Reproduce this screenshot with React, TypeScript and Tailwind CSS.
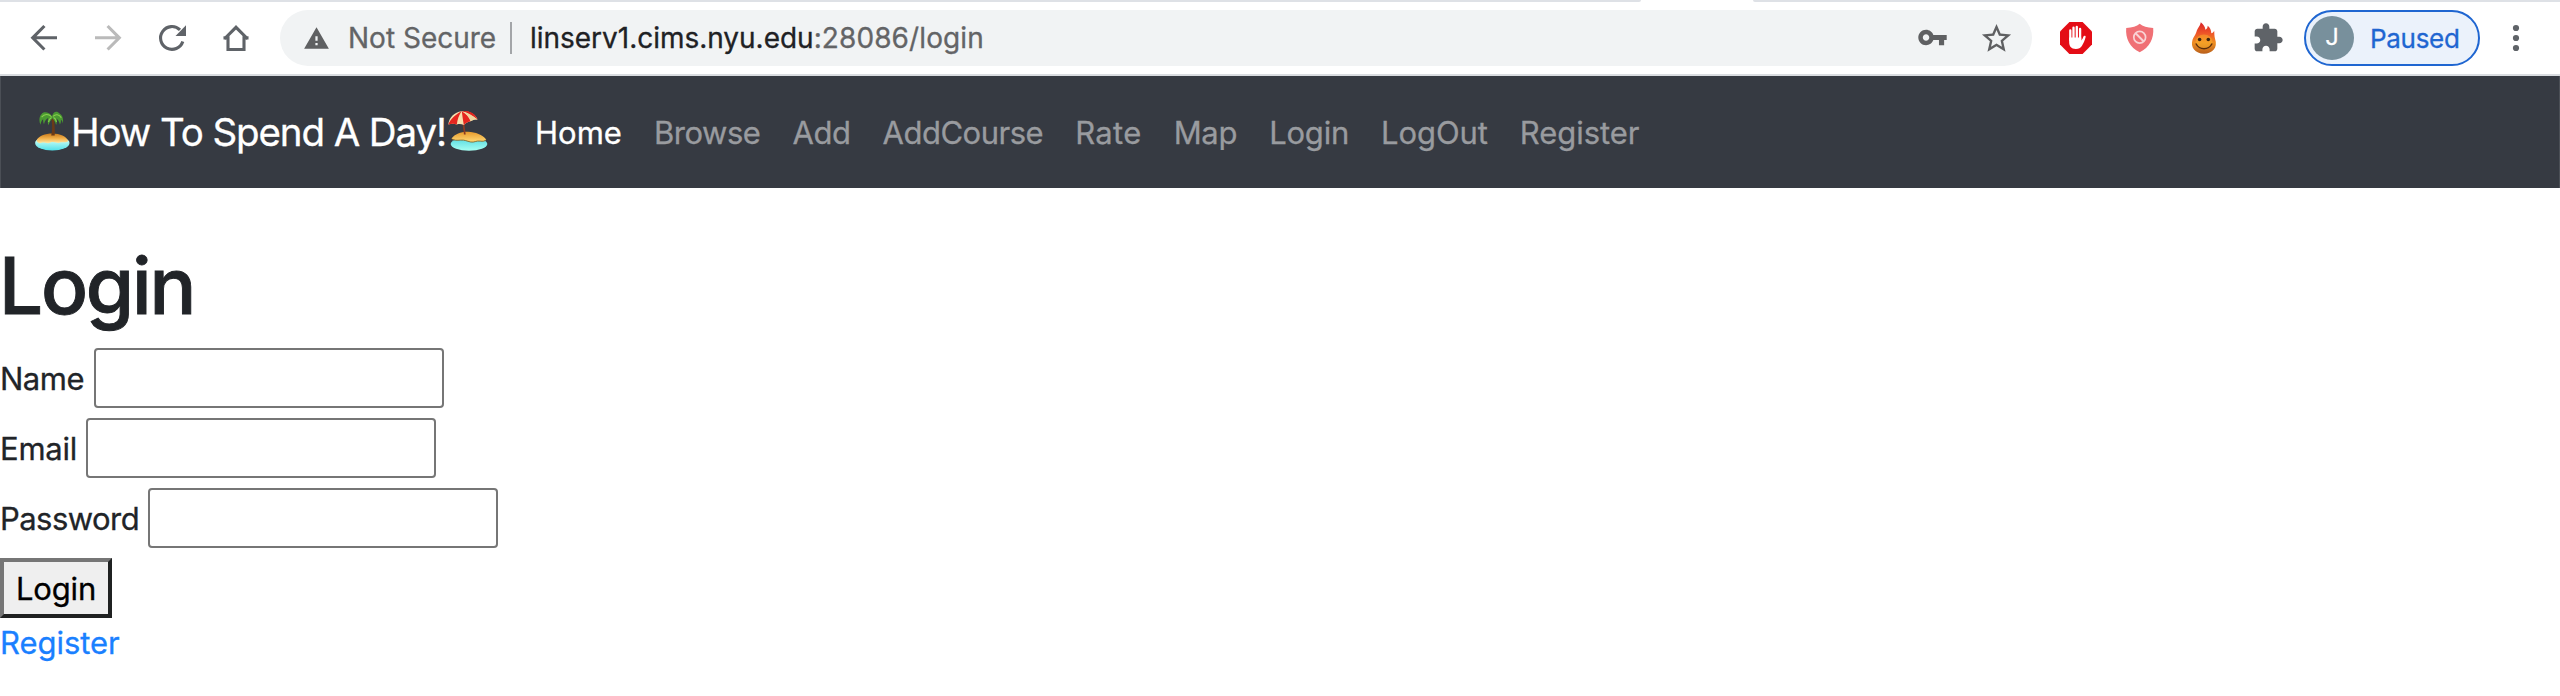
import type { ReactNode } from "react";

function ToolIcon({ children, className = "text-[#5f6368]" }: { children: ReactNode; className?: string }) {
  return (
    <svg viewBox="0 0 40 40" className={`size-10 shrink-0 ${className}`} fill="none" stroke="currentColor" strokeWidth="3.1">
      {children}
    </svg>
  );
}

function PalmIsland() {
  return (
    <svg viewBox="0 0 35 40" className="h-10 w-[35px] shrink-0">
      <defs>
        <linearGradient id="sandA" x1="0" y1="0" x2="0" y2="1">
          <stop offset="0" stopColor="#c87a1c" />
          <stop offset="0.5" stopColor="#f2b04a" />
          <stop offset="1" stopColor="#ffe9a8" />
        </linearGradient>
        <linearGradient id="seaA" x1="0" y1="0" x2="0" y2="1">
          <stop offset="0.3" stopColor="#c9fdf5" />
          <stop offset="1" stopColor="#4fe0ea" />
        </linearGradient>
      </defs>
      <ellipse cx="17.3" cy="32" rx="17.2" ry="7.6" fill="url(#seaA)" />
      <path d="M1.6 29.5C3.5 25 10 22.6 17.5 22.6S31.5 25.5 33 30c-2 2.4-5.5 0.4-8 1.6s-6-1.6-9.5 0-6.5-1-9 0.2-4.400-0.500-4.900-2.300z" fill="url(#sandA)" />
      <path d="M16.200 24.500c1.200-5 1.300-10 0.200-16.500l2.400-0.600c1 6.500 1.200 12 0.900 17.200z" fill="#6b3a17" />
      <path d="M17 5.500C14.500 1 8.500 0 6.500 3.200 4 5.500 3.800 10.500 5.600 13.800c0.400-3 1.200-4.600 2.600-5.600-0.200 2 0 3.600 0.800 5 0.700-3 2.200-5.200 4.200-6.200-0.700 2.500-0.600 5 0.200 7.200 1-3 2.400-5.200 4-7 1.800 1.800 3 4 3.700 6.800 0.900-2 0.900-4.200 0.300-6.400 1.700 1.200 2.900 3.200 3.500 6 1-1.600 1.200-3.200 0.900-5 1 0.700 1.700 2 2 3.800C28.700 8.200 27.500 4 24.500 2.500 21.500-0.800 18 1.200 17 5.500z" fill="#4a9a32" />
      <path d="M16.500 5.600C13.500 2.800 9.500 2.600 6.600 6.200M18 5.400c2.500-2.600 6-2.200 8.300 1.400M16.500 6.500c-1.500 0.700-2.700 2.300-3 4.500M18.600 6.500c1.500 0.700 2.500 2.300 2.900 4.300" fill="none" stroke="#8bd04e" strokeWidth="1.100" />
    </svg>
  );
}

function BeachUmbrella() {
  return (
    <svg viewBox="0 0 40 40" className="size-10 shrink-0">
      <defs>
        <linearGradient id="sandB" x1="0" y1="0" x2="0" y2="1">
          <stop offset="0" stopColor="#e79a2c" />
          <stop offset="1" stopColor="#ffd976" />
        </linearGradient>
        <linearGradient id="seaB" x1="0" y1="0" x2="0" y2="1">
          <stop offset="0.2" stopColor="#63dfe4" />
          <stop offset="1" stopColor="#a6fff3" />
        </linearGradient>
      </defs>
      <ellipse cx="21" cy="33" rx="18.300" ry="6.700" fill="url(#seaB)" />
      <path d="M3.500 27.500C7 23 13 20.600 20 20.800c7.500 0.200 14.500 3.200 18.200 7.600-1 1.800-3.500 2-6 1.600-4-0.600-6 1.600-9.500 0.900-4-0.800-6-2.300-10-1.900-4 0.300-7.500 0.500-9.200-1.500z" fill="url(#sandB)" />
      <path d="M3.500 27.800c2 1.800 5.500 1.600 9.200 1.300 4-0.400 6 1.100 10 1.900 3.500 0.700 5.500-1.500 9.500-0.900 2.500 0.400 5 0.200 6-1.600" fill="none" stroke="#7c5a20" strokeWidth="0.800" />
      <path d="M14.300 3L16.800 23.500" stroke="#8a3a22" strokeWidth="1.800" />
      <path d="M0.300 13.500C1 6.500 6.500 1 13.500 0.300 21-0.500 27.500 3 29.600 8.600c-3-0.300-5 0.300-7 1.700-2.500 0.500-4.600 1.500-6.800 3.600-2.300-1-4.600-1.200-7-0.500-2.600-0.900-5.500-0.900-8.500 0.100z" fill="#f6dfae" />
      <path d="M13.500 0.300C7.500 3.500 2.500 8 0.300 13.500c3-1 5.900-1 8.500-0.100C9.500 8.500 11 4 13.500 0.300zM13.800 0.300c0.500 4.200 1.200 9 2 13.600 2.200-2.100 4.300-3.100 6.800-3.600C21 6 18 2.500 13.800 0.300zM14.500 0.200C20.500 2 25 5 29.600 8.600 27.500 3 21-0.500 14.500 0.200z" fill="#e5261f" />
      <path d="M14.500 0.400C19.500 1.600 24.500 4.600 29.300 8.500c-2.500-0.100-4.600 0.400-6.500 1.600C21.300 6.200 18.500 2.600 14.500 0.400z" fill="#efd59e" />
      <path d="M14.500 0.300c5.500-0.600 10.500 1 13.200 4.700-3.700-2.700-8-4-13.200-4.700z" fill="#d8231d" />
    </svg>
  );
}

function BrowserBar() {
  return (
    <header className="flex h-[76px] flex-col border-b-2 border-[#d9dce0] bg-white">
      <div className="flex h-0.5 justify-between">
        <div className="w-[1641px] rounded-br-[2px] bg-[#dee1e6]" />
        <div className="w-[807px] rounded-bl-[2px] bg-[#dee1e6]" />
      </div>
      <div className="flex flex-1 items-center pl-6">
        <div className="flex gap-6">
          <ToolIcon>
            <path d="M33 19.800H9.500M20.400 8L8.700 19.800L20.400 31.500" />
          </ToolIcon>
          <ToolIcon className="text-[#bababa]">
            <path d="M7 19.800H30.500M19.600 8L31.300 19.800L19.600 31.500" />
          </ToolIcon>
          <ToolIcon>
            <path d="M30.800 23.500A11.400 11.400 0 1 1 28 11.900" />
            <path d="M34 7.200V18H23.500z" fill="currentColor" stroke="none" />
          </ToolIcon>
          <ToolIcon>
            <path d="M8.300 21L20 9.300L31.700 21M7.500 19.900H12V31.500H28V19.900H32.500" />
          </ToolIcon>
        </div>
        <div className="ml-6 flex h-14 w-[1752px] items-center rounded-full bg-[#f1f3f4] pr-[18px] pl-[23px] text-[28px] text-[#636466]">
          <svg viewBox="0 0 24 24" className="size-[27px] shrink-0" fill="#5f6062">
            <path d="M1 21h22L12 2 1 21zm12-3h-2v-2h2v2zm0-4h-2v-4h2v4z" />
          </svg>
          <span className="ml-[18px] w-[162px]">Not Secure</span>
          <span className="h-8 w-0.5 bg-[#a3a5a8]" />
          <span className="ml-[18px] tracking-[-0.02px] text-[#202124]">linserv1.cims.nyu.edu</span>
          <span className="tracking-[0.1px]">:28086/login</span>
          <svg viewBox="0 0 24 24" className="mt-[-2px] mr-[31px] ml-auto size-[31px]" fill="#5f6062">
            <path d="M12.650 10C11.830 7.670 9.610 6 7 6c-3.310 0-6 2.690-6 6s2.690 6 6 6c2.610 0 4.830-1.670 5.650-4H17v4h4v-4h2v-4H12.650zM7 14.500c-1.380 0-2.500-1.120-2.500-2.500s1.120-2.500 2.500-2.500 2.500 1.120 2.500 2.500-1.120 2.500-2.500 2.500z" />
          </svg>
          <svg viewBox="0 0 24 24" className="size-[35px]" fill="#5f6062">
            <path d="M22 9.240l-7.190-.620L12 2 9.190 8.630 2 9.240l5.460 4.730L5.820 21 12 17.270 18.180 21l-1.630-7.030L22 9.240zM12 15.400l-3.760 2.270 1-4.280-3.320-2.880 4.380-.380L12 6.100l1.710 4.040 4.380.380-3.320 2.880 1 4.280L12 15.400z" />
          </svg>
        </div>
        <div className="ml-7 flex gap-8">
          <svg viewBox="0 0 32 32" className="size-8">
            <path d="M9.400 0h13.200L32 9.400v13.200L22.600 32H9.400L0 22.600V9.400z" fill="#e40d16" />
            <path d="M10.300 8.500V18M13.500 5.700V17M16.800 5V17M20.100 7V18" stroke="#fff" strokeWidth="2.300" strokeLinecap="round" />
            <path d="M9.150 15.500h12.100v3c1-1 1.700-2.400 2.200-3.900 0.500-1.200 2.500-0.900 2.200 0.500-0.900 3.300-2 6.200-3.800 8.900-1.300 2.100-3 3-6 3-4.800 0-6.700-3-6.700-7z" fill="#fff" />
          </svg>
          <svg viewBox="0 0 32 32" className="size-8">
            <path d="M15.700 1.800c3 2.500 7.500 4 13.500 4.100 0.900 10.500-3.600 19.500-13.500 24.400C5.800 25.400 1.300 16.400 2.200 5.900c6-0.100 10.500-1.600 13.500-4.100z" fill="#f07075" />
            <circle cx="15.700" cy="15.300" r="5.900" fill="none" stroke="#f9d3d5" strokeWidth="1.700" />
            <path d="M11.600 11.300l8.200 8.200" stroke="#f9d3d5" strokeWidth="2" />
          </svg>
          <svg viewBox="0 0 32 32" className="size-8">
            <defs>
              <linearGradient id="flame" x1="0" y1="0" x2="0" y2="1">
                <stop offset="0" stopColor="#d9232a" />
                <stop offset="0.350" stopColor="#ee5528" />
                <stop offset="0.650" stopColor="#ee8f22" />
                <stop offset="1" stopColor="#b9601c" />
              </linearGradient>
            </defs>
            <path d="M12.800 0.300c2.800 2.200 4.200 4.400 4.600 7.400 1.500-0.800 2.300-2.200 2.300-4 2.400 2 3.500 4.400 3.600 7.600 1.300-0.400 2.200-1.200 2.900-2.600 0.200 2.800 0 5 0.900 8.300 3 8.500-2.700 14.700-11.200 14.700S1.900 25.500 4.600 17.500c1-2.400 2.400-4 3.400-6.500 0.800-2 0.800-3 2-4.800 1.300-2 2.300-3.400 2.800-5.900z" fill="url(#flame)" />
            <ellipse cx="16" cy="20" rx="8.500" ry="7.500" fill="#fbb52c" opacity="0.450" />
            <circle cx="11.600" cy="17.500" r="1.800" fill="#3b2410" />
            <circle cx="20.300" cy="17.500" r="1.800" fill="#3b2410" />
            <path d="M8.200 22c3.200 6.300 12.400 6.300 15.600 0" fill="none" stroke="#5a2d0c" strokeWidth="1.500" strokeLinecap="round" />
          </svg>
          <svg viewBox="0 0 24 24" className="size-8" fill="#5f6368">
            <path d="M20.500 11H19V7c0-1.100-.9-2-2-2h-4V3.500C13 2.120 11.880 1 10.500 1S8 2.120 8 3.500V5H4c-1.100 0-1.990.9-1.990 2v3.800H3.500c1.490 0 2.700 1.210 2.700 2.700s-1.210 2.700-2.700 2.700H2V20c0 1.100.9 2 2 2h3.800v-1.500c0-1.490 1.210-2.700 2.700-2.700 1.490 0 2.700 1.210 2.700 2.700V22H17c1.100 0 2-.9 2-2v-4h1.500c1.380 0 2.500-1.120 2.500-2.500S21.880 11 20.500 11z" />
          </svg>
        </div>
        <div className="ml-5 flex h-14 w-44 items-center rounded-full border-2 border-[#1f66d1] bg-[#ebf2fb] pl-1">
          <span className="flex size-11 items-center justify-center rounded-full bg-[#78909c] font-['Roboto',sans-serif] text-[23px] text-white">J</span>
          <span className="ml-4 pt-px text-[26px] tracking-[-0.3px] text-[#1f66d1]">Paused</span>
        </div>
        <svg viewBox="0 0 32 40" className="ml-5 h-10 w-8" fill="#5f6368">
          <circle cx="16" cy="10" r="3.100" />
          <circle cx="16" cy="20" r="3.100" />
          <circle cx="16" cy="30" r="3.100" />
        </svg>
      </div>
    </header>
  );
}

const links = [
  { label: "Home", style: "text-white tracking-[0.03px]" },
  { label: "Browse", style: "text-[#999b9f] tracking-[-0.47px]" },
  { label: "Add", style: "text-[#999b9f] tracking-[-0.4px]" },
  { label: "AddCourse", style: "text-[#999b9f] tracking-[-0.5px]" },
  { label: "Rate", style: "text-[#999b9f] tracking-[0.35px]" },
  { label: "Map", style: "text-[#999b9f] tracking-[-0.3px]" },
  { label: "Login", style: "text-[#999b9f] tracking-[-0.2px]" },
  { label: "LogOut", style: "text-[#999b9f] tracking-[-0.1px]" },
  { label: "Register", style: "text-[#999b9f] tracking-[-0.05px]" },
];

const fields = [
  { label: "Name", type: "text", width: "w-[94px] tracking-[-0.5px]" },
  { label: "Email", type: "email", width: "w-[86px] tracking-[-0.25px]" },
  { label: "Password", type: "password", width: "w-[148px] tracking-[-0.55px]" },
];

export default function App() {
  return (
    <div className="h-[696px] w-[2560px] overflow-hidden bg-white font-['Inter',sans-serif] text-[31px] text-[#212428] [-webkit-text-stroke:0.3px]">
      <BrowserBar />
      <nav className="flex h-28 items-center border-x border-[#4b4f56] bg-[#363a42] pl-[34px]">
        <div className="flex w-[500px] shrink-0 items-center text-[38.5px] whitespace-nowrap text-white">
          <span className="mt-[-2px]">
            <PalmIsland />
          </span>
          <span className="ml-px w-[377px] pt-0.5 tracking-[-1.1px]">How To Spend A Day!</span>
          <span className="mt-[-2px]">
            <BeachUmbrella />
          </span>
        </div>
        <div className="flex gap-8 pt-[3px]">
          {links.map((l) => (
            <a key={l.label} href="#" className={l.style}>
              {l.label}
            </a>
          ))}
        </div>
      </nav>
      <main className="pt-[50px]">
        <h1 className="-ml-px h-24 text-[78px] leading-[96px] font-medium tracking-[-2.2px] [-webkit-text-stroke:0.9px]">Login</h1>
        <form className="pt-[9px]">
          {fields.map((f) => (
            <label key={f.label} className="flex h-[70px] items-center">
              <span className={`pt-0.5 ${f.width}`}>{f.label}</span>
              <input type={f.type} className="h-[60px] w-[350px] rounded-[4px] border-2 border-[#767676] bg-white" />
            </label>
          ))}
          <div className="flex h-[70px] items-center">
            <button
              type="button"
              className="h-[60px] w-28 border-4 border-t-[#767676] border-r-[#1f2121] border-b-[#1f2121] border-l-[#767676] bg-[#efefef] pt-0.5 tracking-[-0.15px] text-black"
            >
              Login
            </button>
          </div>
        </form>
        <a href="#" className="-mt-1 flex h-12 items-center tracking-[-0.05px] text-[#1a80ff]">
          Register
        </a>
      </main>
    </div>
  );
}
